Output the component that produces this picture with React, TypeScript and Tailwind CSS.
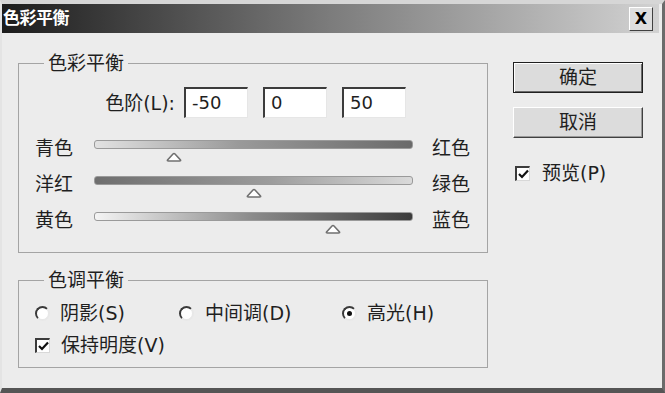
import { FC } from "react";

const font = "font-['DejaVu_Sans','Noto_Sans_CJK_SC',sans-serif]";

const Thumb: FC = () => (
  <svg width="17" height="10" viewBox="0 0 17 10">
    <path
      d="M2 8 L7.5 2 Q8.5 1 9.5 2 L15 8 Q15.5 9 14 9 H3 Q1.5 9 2 8 Z"
      fill="#ffffff"
      stroke="#707070"
      strokeWidth="1.6"
    />
  </svg>
);

const Check: FC = () => (
  <span className="w-[15px] h-[15px] bg-white border-t-2 border-l-2 border-[#3c3c3c] border-b border-r border-b-[#d8d8d8] border-r-[#d8d8d8] flex items-center justify-center">
    <svg width="11" height="10" viewBox="0 0 11 10">
      <path d="M1 5 L4 8 L10 1.5" fill="none" stroke="#111" strokeWidth="2.2" />
    </svg>
  </span>
);

const Radio: FC<{ on?: boolean }> = ({ on }) => (
  <span className="w-[15px] h-[15px] rounded-full bg-white border-2 border-t-[#3a3a3a] border-l-[#3a3a3a] border-b-[#e8e8e8] border-r-[#e8e8e8] flex items-center justify-center">
    {on && <span className="w-[5px] h-[5px] rounded-full bg-[#111]" />}
  </span>
);

const sliders = [
  { left: "青色", right: "红色", value: -50, track: "bg-[linear-gradient(to_right,#e2e2e2,#9a9a9a_45%,#6a6a6a)]" },
  { left: "洋红", right: "绿色", value: 0, track: "bg-[linear-gradient(to_right,#6e6e6e,#9c9c9c_55%,#dadada)]" },
  { left: "黄色", right: "蓝色", value: 50, track: "bg-[linear-gradient(to_right,#f4f4f4,#8a8a8a_50%,#3c3c3c)]" },
];

const App: FC = () => {
  return (
    <div className={`w-[665px] h-[393px] flex flex-col bg-[#ececec] border-t-[4px] border-t-[#d6d6d6] border-l-2 border-l-[#e4e4e4] border-r-[3px] border-r-[#6b6b6b] border-b-[5px] border-b-[#555] text-[#1f1f1f] ${font}`}>
      {/* Title bar */}
      <div className="h-[29px] mr-[3px] flex items-center justify-between bg-[linear-gradient(to_right,#1c1c1c,#7c7c7c_50%,#d2d2d2)]">
        <span className="pl-[1px] text-white font-bold text-[17px] leading-none tracking-[-0.5px]">色彩平衡</span>
        <span className="w-[24px] h-[24px] mr-[6px] bg-[#dedede] border border-t-white border-l-white border-b-[#404040] border-r-[#404040] flex items-center justify-center text-[16px] font-bold text-black leading-none">
          X
        </span>
      </div>

      {/* Body */}
      <div className="flex pl-[16px]">
        {/* Left column */}
        <div className="w-[470px] flex flex-col">
          <fieldset className="mt-[19px] border border-[#a4a4a4] px-0">
            <legend className="ml-[25px] px-[4px] text-[19px] leading-[22px]">色彩平衡</legend>

            <div className="mt-[13px] flex items-center">
              <span className="w-[165px] pr-[9px] text-right text-[19px] leading-[22px]">色阶(L):</span>
              {["-50", "0", "50"].map((v) => (
                <span
                  key={v}
                  className="w-[64px] h-[31px] mr-[15px] bg-white border-t-2 border-l-2 border-[#3c3c3c] border-b border-r border-b-[#e6e6e6] border-r-[#e6e6e6] pl-[6px] flex items-center text-[18px] leading-none"
                >
                  {v}
                </span>
              ))}
            </div>

            <div className="mt-[19px] mb-[7px] flex flex-col pl-[16px]">
              {sliders.map((s) => (
                <div key={s.left} className="h-[36px] flex items-start">
                  <span className="w-[59px] text-[19px] leading-[22px]">{s.left}</span>
                  <div className="pt-[3px] w-[319px]">
                    <div className={`relative h-[9px] rounded-[3px] border border-[#9a9a9a] ${s.track}`}>
                      <div
                        className="absolute top-[11px] -translate-x-1/2 flex"
                        style={{ left: `${(s.value + 100) / 2}%` }}
                      >
                        <Thumb />
                      </div>
                    </div>
                  </div>
                  <span className="ml-[19px] text-[19px] leading-[22px]">{s.right}</span>
                </div>
              ))}
            </div>
          </fieldset>

          <fieldset className="mt-[16px] border border-[#a4a4a4] px-0">
            <legend className="ml-[25px] px-[4px] text-[19px] leading-[22px]">色调平衡</legend>

            <div className="mt-[11px] pl-[16px] flex items-center text-[19px] leading-[22px]">
              <div className="w-[144px] flex items-center gap-[10px]">
                <Radio />
                <span>阴影(S)</span>
              </div>
              <div className="w-[163px] flex items-center gap-[11px]">
                <Radio />
                <span>中间调(D)</span>
              </div>
              <div className="flex items-center gap-[10px]">
                <Radio on />
                <span>高光(H)</span>
              </div>
            </div>

            <div className="mt-[10px] mb-[11px] pl-[16px] flex items-center gap-[11px] text-[19px] leading-[22px]">
              <Check />
              <span>保持明度(V)</span>
            </div>
          </fieldset>
        </div>

        {/* Right column */}
        <div className="ml-[25px] w-[130px] flex flex-col">
          <button className="mt-[29px] h-[31px] border border-[#202020] bg-[#dcdcdc] shadow-[inset_1px_1px_0_#ffffff,inset_-1px_-1px_0_#6a6a6a] text-[19px] leading-none">
            确定
          </button>
          <button className="mt-[14px] h-[31px] bg-[#dcdcdc] border border-t-white border-l-white border-b-[#404040] border-r-[#404040] shadow-[inset_-1px_-1px_0_#9a9a9a] text-[19px] leading-none">
            取消
          </button>
          <div className="mt-[24px] ml-[2px] flex items-center gap-[12px] text-[19px] leading-[22px]">
            <Check />
            <span>预览(P)</span>
          </div>
        </div>
      </div>
    </div>
  );
};

export default App;
